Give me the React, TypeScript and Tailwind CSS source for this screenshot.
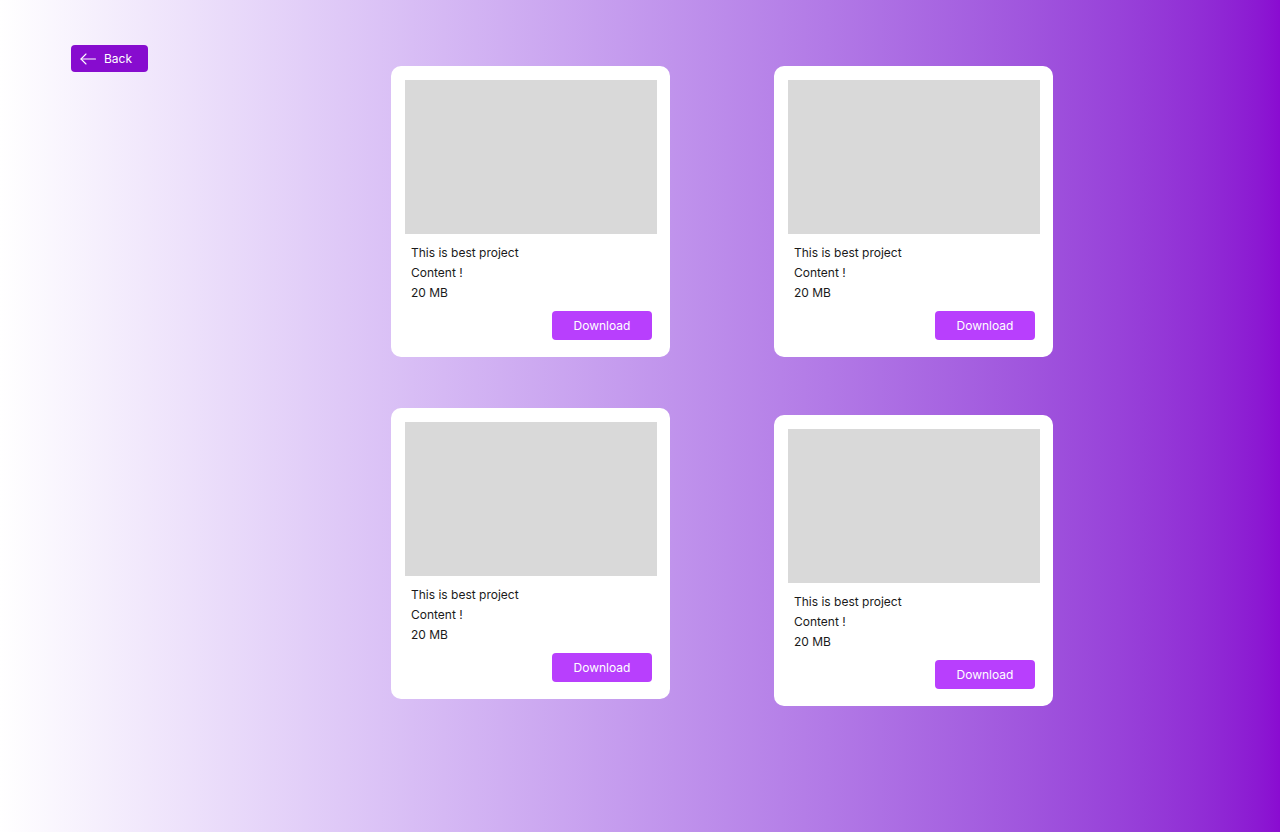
import React from "react";

function Card({ className = "" }: { className?: string }) {
  return (
    <div className={"w-[279px] rounded-[10px] bg-white pl-[14px] pr-[13px] pt-[14px] pb-[17px] " + className}>
      <div className="h-[154px] w-full bg-[#d9d9d9]" />
      <div className="mt-[9px] pl-[6px] text-[12px] leading-[20px] text-[#1a1a1a]">
        <div>This is best project</div>
        <div>Content !</div>
        <div>20 MB</div>
      </div>
      <div className="mt-[8px] flex justify-end pr-[5px]">
        <button className="h-[29px] w-[100px] rounded-[4px] bg-[#b83ffd] text-[12px] text-white">
          Download
        </button>
      </div>
    </div>
  );
}

export default function App() {
  return (
    <div
      className="flex h-[832px] w-full items-start bg-linear-to-r from-white to-[#8a0bd1]"
      style={{ fontFamily: "Inter, 'Noto Sans', sans-serif" }}
    >
      <button className="ml-[71px] mt-[45px] flex h-[27px] w-[77px] items-center gap-[8px] rounded-[4px] bg-[#870ccf] pl-[9px] text-[12px] text-white">
        <svg width="16" height="12" viewBox="0 0 16 12" fill="none" stroke="white" strokeWidth="1.1" strokeLinecap="round" strokeLinejoin="round">
          <path d="M15.5 6H1" />
          <path d="M6 1L1 6l5 5" />
        </svg>
        <span>Back</span>
      </button>
      <div className="ml-[243px] mt-[66px] grid grid-cols-[279px_279px] gap-x-[104px] gap-y-[51px] items-start">
        <Card />
        <Card />
        <Card />
        <Card className="mt-[7px]" />
      </div>
    </div>
  );
}
